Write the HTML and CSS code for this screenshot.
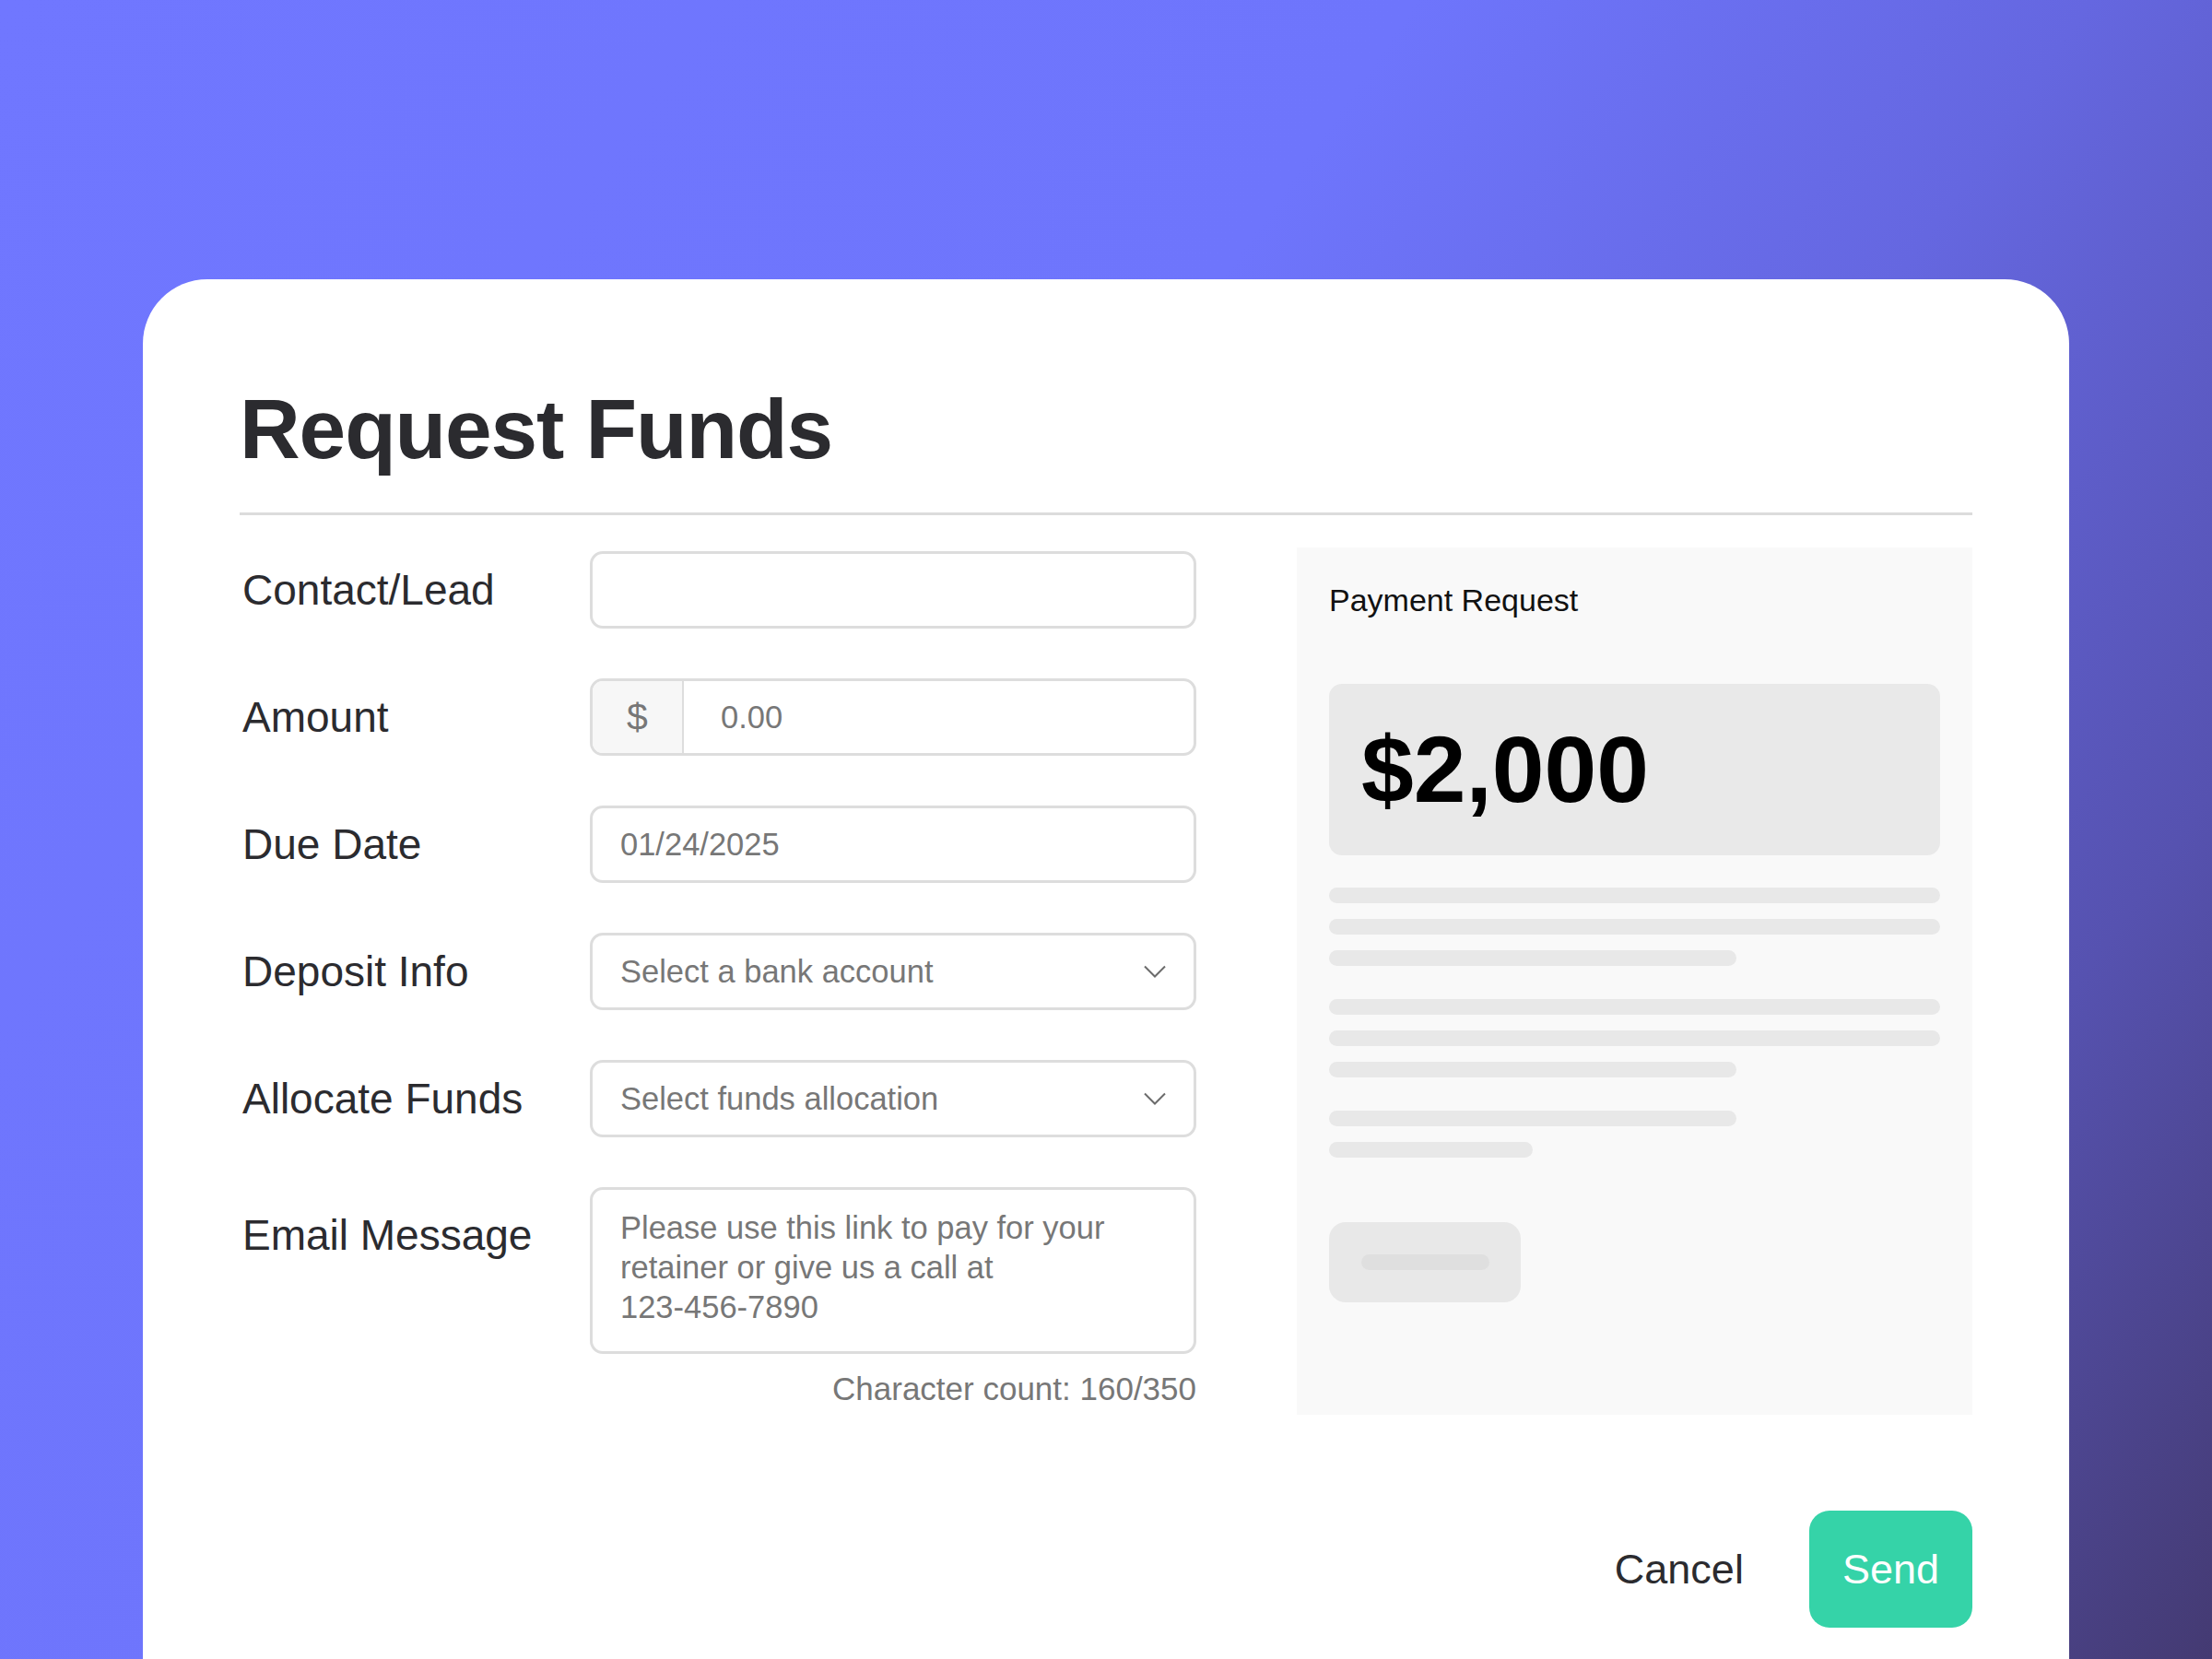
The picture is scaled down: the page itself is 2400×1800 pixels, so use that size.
FILE: index.html
```html
<!DOCTYPE html>
<html lang="en">
<head>
    <meta charset="UTF-8">
    <title>Request Funds</title>
    <link rel="stylesheet" href="styles.css">
</head>
<body>
<div class="card">
    <h1 class="title">Request Funds</h1>
    <div class="divider"></div>

    <div class="main">
        <!-- form -->
        <div class="form">
            <div class="label">Contact/Lead</div>
            <div class="field"></div>

            <div class="label">Amount</div>
            <div class="field field-amount">
                <span class="prefix">$</span>
                <span class="value">0.00</span>
            </div>

            <div class="label">Due Date</div>
            <div class="field"><span class="value">01/24/2025</span></div>

            <div class="label">Deposit Info</div>
            <div class="field field-select">
                <span class="value">Select a bank account</span>
                <svg class="chevron" width="24" height="14" viewBox="0 0 24 14">
                    <path d="M1 1.5 L12 12.5 L23 1.5" fill="none" stroke="#6b6b6b" stroke-width="2"/>
                </svg>
            </div>

            <div class="label">Allocate Funds</div>
            <div class="field field-select">
                <span class="value">Select funds allocation</span>
                <svg class="chevron" width="24" height="14" viewBox="0 0 24 14">
                    <path d="M1 1.5 L12 12.5 L23 1.5" fill="none" stroke="#6b6b6b" stroke-width="2"/>
                </svg>
            </div>

            <div class="label label-top">Email Message</div>
            <div class="message">
                <div class="field field-area">Please use this link to pay for your<br>retainer or give us a call at<br>123-456-7890</div>
                <div class="count">Character count: 160/350</div>
            </div>
        </div>

        <!-- preview -->
        <div class="preview">
            <div class="preview_title">Payment Request</div>
            <div class="preview_amount">$2,000</div>
            <div class="sk_group">
                <div class="sk_line"></div>
                <div class="sk_line"></div>
                <div class="sk_line sk_two"></div>
            </div>
            <div class="sk_group">
                <div class="sk_line"></div>
                <div class="sk_line"></div>
                <div class="sk_line sk_two"></div>
            </div>
            <div class="sk_group">
                <div class="sk_line sk_two"></div>
                <div class="sk_line sk_one"></div>
            </div>
            <div class="sk_button"><span></span></div>
        </div>
    </div>

    <div class="footer">
        <button class="btn_cancel">Cancel</button>
        <button class="btn_send">Send</button>
    </div>
</div>
</body>
</html>
```

FILE: styles.css
```css
* {
    margin: 0;
    padding: 0;
    box-sizing: border-box;
}

html, body {
    width: 2400px;
    height: 1800px;
    overflow: hidden;
}

body {
    font-family: "Liberation Sans", Arial, Helvetica, sans-serif;
    color: #2b2b2f;
    background: linear-gradient(125deg, #7077ff 0%, #6e75fc 42%, #6567e0 62%, #5652b0 82%, #443a72 100%);
}

.card {
    width: 2090px;
    height: 1600px;
    margin: 303px 0 0 155px;
    padding: 117px 105px 0 105px;
    background: #fff;
    border-radius: 70px 70px 0 0;
}

.title {
    font-size: 91px;
    font-weight: bold;
    line-height: 91px;
    letter-spacing: -1.1px;
    color: #2b2b2f;
}

.divider {
    height: 3px;
    margin-top: 45px;
    background: #dcdcdc;
}

.main {
    display: flex;
    gap: 109px;
    align-items: flex-start;
}

/* form */
.form {
    width: 1038px;
    padding-top: 39px;
    display: grid;
    grid-template-columns: 380px 658px;
    row-gap: 54px;
}

.label {
    align-self: center;
    padding-left: 3px;
    font-size: 46px;
    line-height: 54px;
    color: #2b2b2f;
}

.label-top {
    align-self: start;
    padding-top: 25px;
}

.field {
    height: 84px;
    display: flex;
    align-items: center;
    padding: 0 30px;
    border: 3px solid #dddddd;
    border-radius: 14px;
    font-size: 34.5px;
    color: #777;
    background: #fff;
}

.field-amount {
    padding: 0;
    overflow: hidden;
}

.prefix {
    width: 99px;
    height: 100%;
    display: flex;
    align-items: center;
    justify-content: center;
    background: #f7f7f7;
    border-right: 2px solid #dddddd;
    font-size: 41px;
    color: #777;
}

.field-amount .value {
    padding-left: 40px;
}

.field-select {
    justify-content: space-between;
}

.field-area {
    height: 181px;
    display: block;
    padding: 20px 30px;
    line-height: 43px;
}

.count {
    margin-top: 17px;
    text-align: right;
    font-size: 35px;
    line-height: 41px;
    color: #777;
}

/* preview */
.preview {
    width: 733px;
    height: 941px;
    margin-top: 35px;
    padding: 37px 35px 0 35px;
    background: #f9f9f9;
}

.preview_title {
    font-size: 34px;
    line-height: 40px;
    color: #111;
}

.preview_amount {
    height: 186px;
    margin-top: 71px;
    padding-left: 35px;
    display: flex;
    align-items: center;
    background: #e9e9e9;
    border-radius: 14px;
    font-size: 102px;
    font-weight: bold;
    line-height: 102px;
    color: #000;
}

.sk_group {
    display: flex;
    flex-direction: column;
    gap: 17px;
    margin-top: 36px;
}

.preview_amount + .sk_group {
    margin-top: 35px;
}

.sk_line {
    height: 17px;
    width: 100%;
    border-radius: 9px;
    background: #e8e8e8;
}

.sk_two {
    width: 442px;
}

.sk_one {
    width: 221px;
}

.sk_button {
    width: 208px;
    height: 87px;
    margin-top: 70px;
    display: flex;
    align-items: center;
    justify-content: center;
    border-radius: 18px;
    background: #e8e8e8;
}

.sk_button span {
    width: 139px;
    height: 17px;
    border-radius: 9px;
    background: #dfdfdf;
}

/* footer */
.footer {
    margin-top: 104px;
    display: flex;
    justify-content: flex-end;
    align-items: center;
    gap: 71px;
}

.footer button {
    font-family: inherit;
    font-size: 45px;
    border: none;
    cursor: pointer;
}

.btn_cancel {
    background: none;
    color: #2b2b2f;
}

.btn_send {
    height: 127px;
    padding: 0 36px;
    border-radius: 22px;
    background: #35d3a8;
    color: #fff;
}
```
